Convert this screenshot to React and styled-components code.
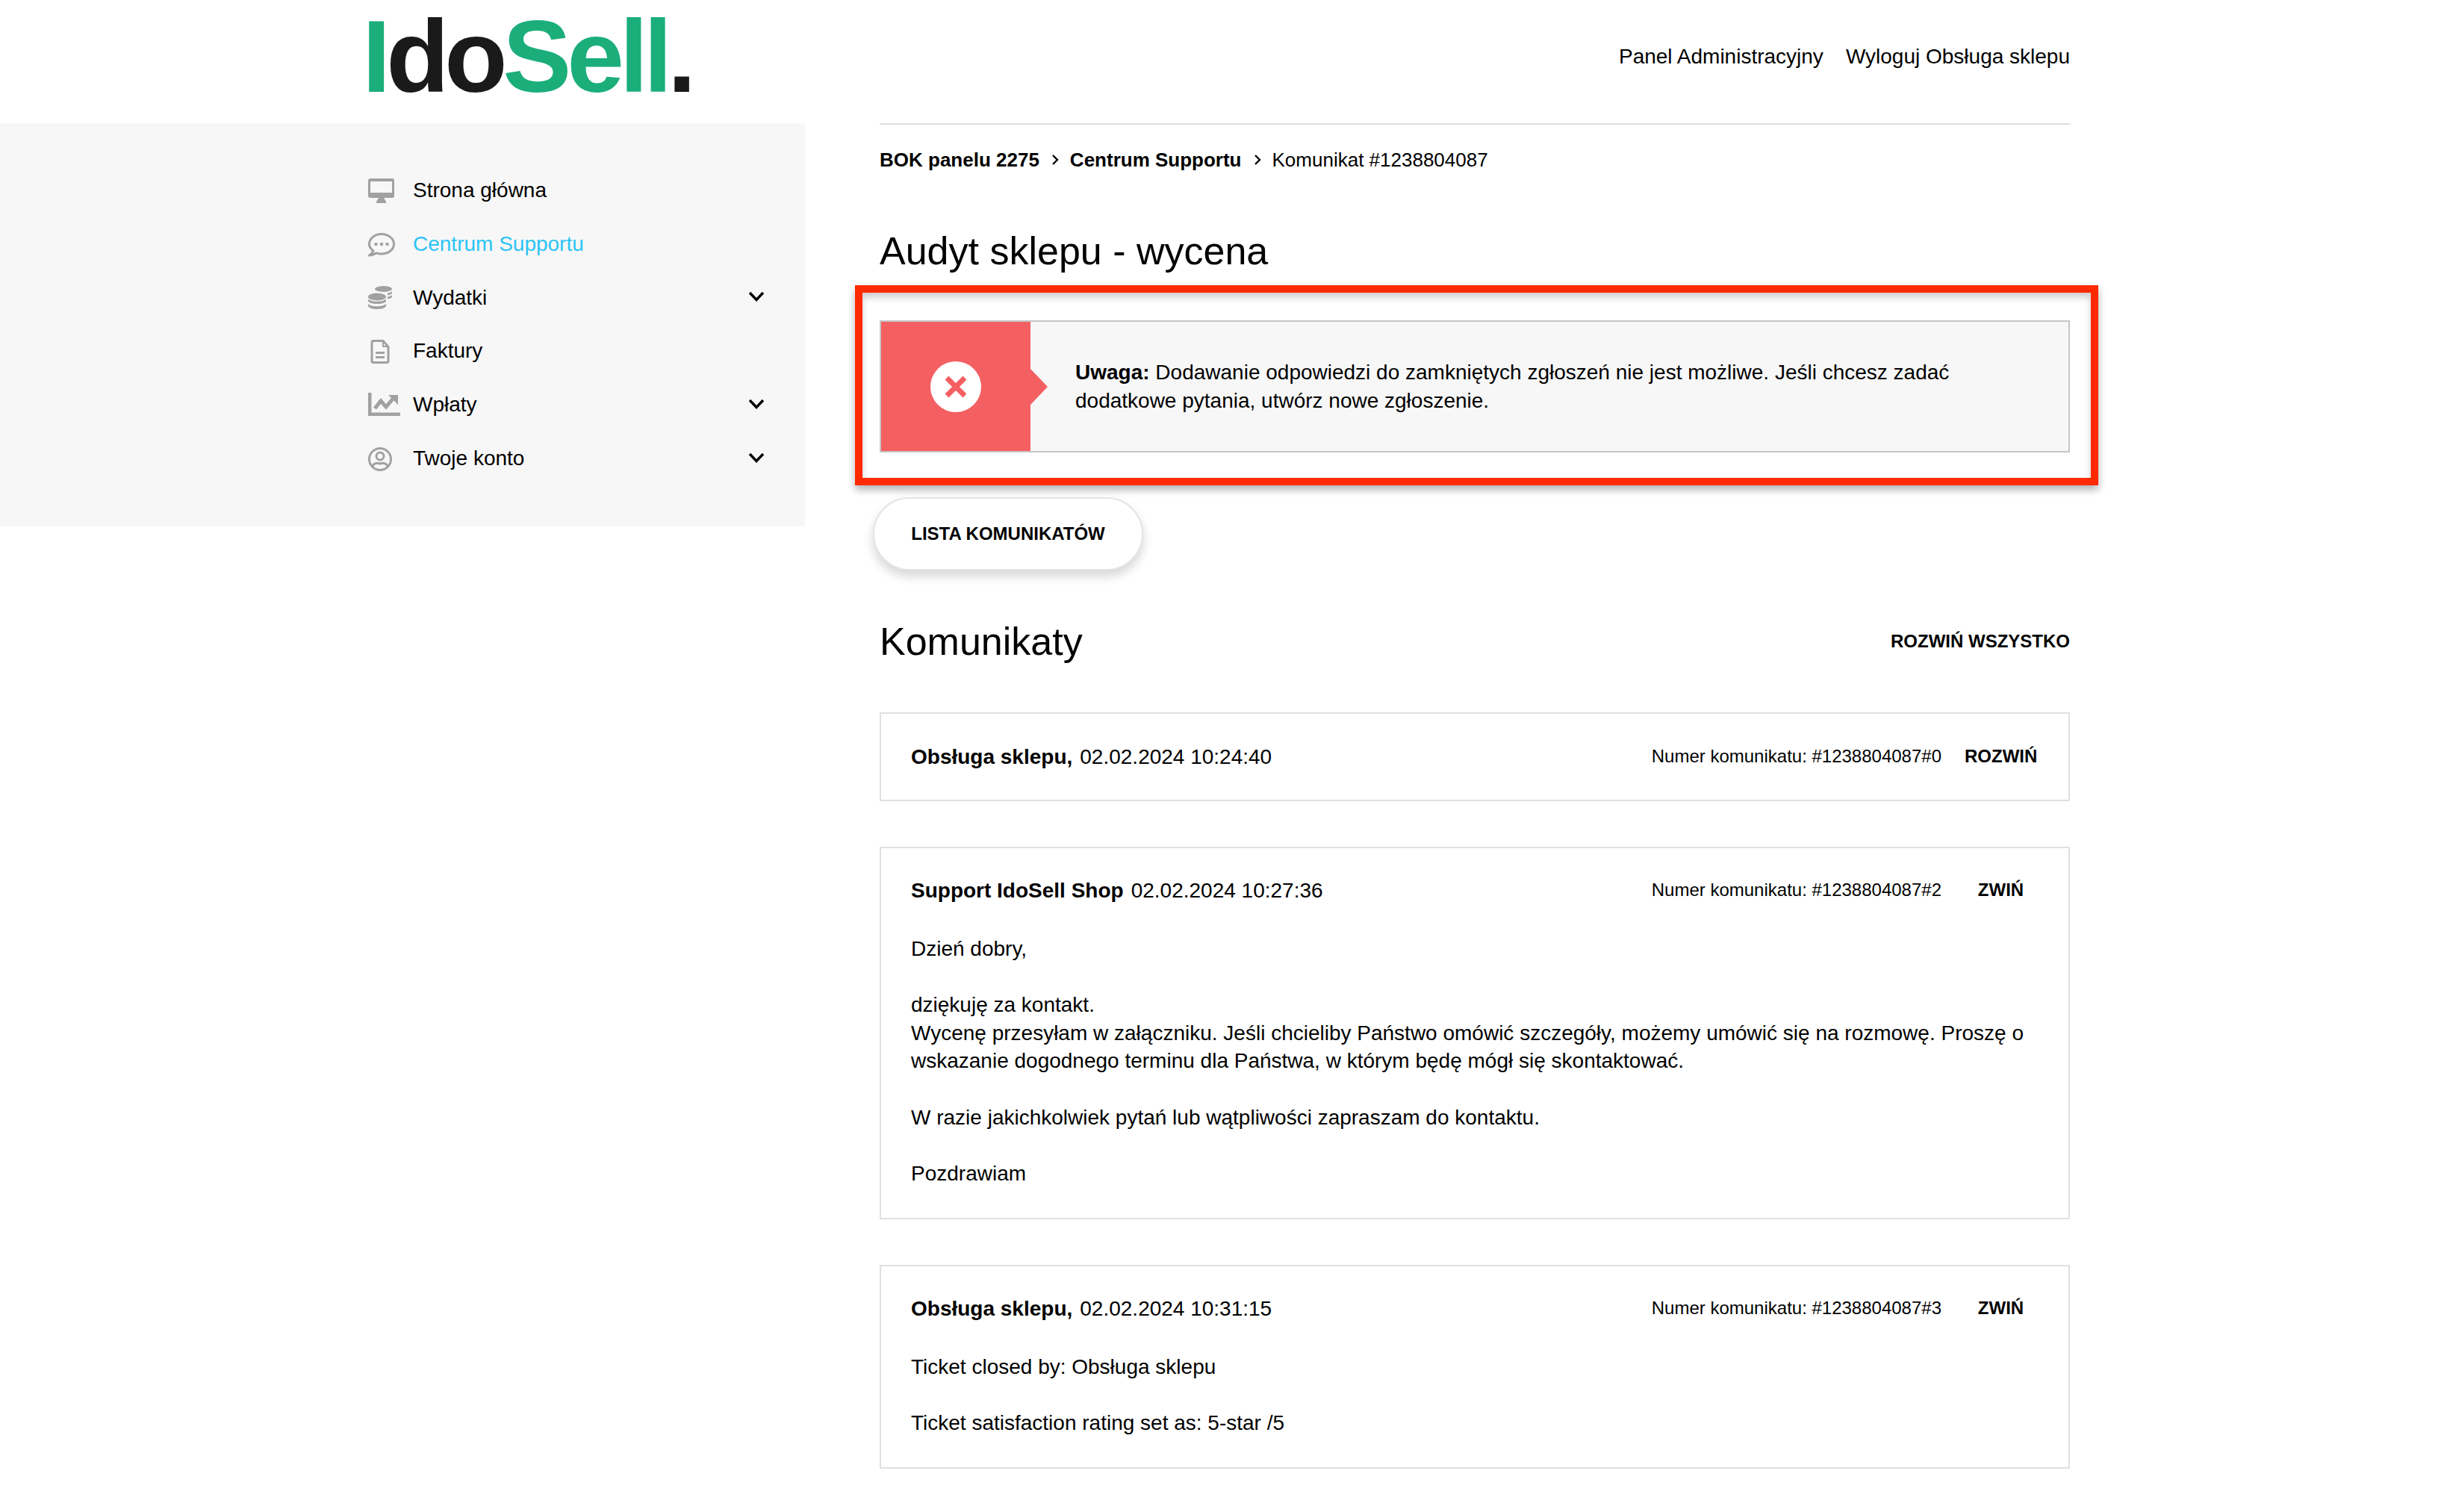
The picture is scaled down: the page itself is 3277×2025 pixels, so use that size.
import React from 'react';
import styled, { createGlobalStyle } from 'styled-components';

const GlobalStyle = createGlobalStyle`
  html, body {
    margin: 0;
    padding: 0;
    background: #fff;
    color: #000;
    font-family: "Liberation Sans", Arial, sans-serif;
    font-size: 28px;
    line-height: 37.6px;
  }
  * { box-sizing: border-box; }
`;

const Header = styled.header`
  height: 165px;
  padding: 0 505px 0 491px;
  display: flex;
  align-items: center;
  justify-content: space-between;
`;

const Logo = styled.div`
  font-size: 138px;
  line-height: 150px;
  font-weight: 700;
  letter-spacing: -6.2px;
  color: #1a1a1a;
  margin: -15px 0 0 -6px;
`;

const Green = styled.span`
  color: #1bae7b;
`;

const TopLinks = styled.nav`
  display: flex;
  gap: 30px;
  margin-top: -14px;
`;

const Layout = styled.div`
  display: grid;
  grid-template-columns: 1078px 1594px;
  column-gap: 100px;
  align-items: start;
`;

const Sidebar = styled.aside`
  background: #f7f7f7;
  padding: 53px 54px 56px 493px;
`;

const NavRow = styled.div`
  height: 71.8px;
  display: flex;
  align-items: center;
  color: ${(p) => (p.$active ? '#2cc4f5' : '#000')};
`;

const NavIcon = styled.svg`
  width: 44px;
  height: 36px;
  margin-right: 16px;
  flex: none;
  fill: #a1a1a1;
`;

const NavLabel = styled.span`
  flex: 1;
  padding-top: 2px;
`;

const Chevron = styled.svg`
  width: 22px;
  height: 14px;
  fill: none;
  stroke: #000;
  stroke-width: 3.4px;
`;

const Main = styled.main`
  border-top: 2px solid #dedede;
`;

const Breadcrumb = styled.div`
  margin-top: 28px;
  display: flex;
  align-items: center;
  font-size: 26px;
  line-height: 38px;
`;

const Crumb = styled.span`
  font-weight: ${(p) => (p.$current ? 400 : 700)};
`;

const CrumbArrow = styled.svg`
  width: 10px;
  height: 16px;
  margin: 0 15px 0 16px;
  fill: none;
  stroke: #000;
  stroke-width: 2.4px;
`;

const Title = styled.h1`
  margin: 71px 0 0;
  font-size: 52px;
  line-height: 64px;
  font-weight: 400;
`;

const Highlight = styled.div`
  margin: 14px -38px 0 -33px;
  padding: 37px 28px 34px 23px;
  border: 10px solid #ff2a00;
  box-shadow: 0 6px 10px rgba(0, 0, 0, 0.3), inset 0 6px 10px rgba(0, 0, 0, 0.2);
`;

const Alert = styled.div`
  height: 177px;
  display: flex;
  align-items: center;
  background: #f7f7f7;
  border: 2px solid #c6c6c6;
`;

const AlertMark = styled.div`
  position: relative;
  width: 200px;
  height: 100%;
  flex: none;
  display: flex;
  align-items: center;
  justify-content: center;
  background: #f45f62;

  &::after {
    content: '';
    position: absolute;
    left: 100%;
    top: 50%;
    margin-top: -24px;
    border-style: solid;
    border-width: 24px 0 24px 23px;
    border-color: transparent transparent transparent #f45f62;
  }
`;

const AlertCircle = styled.div`
  width: 68px;
  height: 68px;
  border-radius: 50%;
  background: #fff;
  display: flex;
  align-items: center;
  justify-content: center;
`;

const AlertCross = styled.svg`
  width: 34px;
  height: 34px;
  stroke: #f45f62;
  stroke-width: 7px;
`;

const AlertText = styled.p`
  margin: 0;
  padding: 0 90px 0 60px;
`;

const ListButton = styled.button`
  display: block;
  margin: 16px 0 0 -9px;
  width: 362px;
  height: 98px;
  background: #fff;
  border: 2px solid #e4e4e4;
  border-radius: 49px;
  box-shadow: 0 8px 14px rgba(0, 0, 0, 0.16);
  font-family: inherit;
  font-size: 24px;
  font-weight: 700;
  color: #000;
  padding: 0;
`;

const SectionHead = styled.div`
  margin-top: 63px;
  display: flex;
  align-items: center;
  justify-content: space-between;
`;

const SectionTitle = styled.h2`
  margin: 0;
  font-size: 52px;
  line-height: 64px;
  font-weight: 400;
`;

const ExpandAll = styled.span`
  font-size: 24px;
  font-weight: 700;
`;

const Messages = styled.div`
  margin-top: 63px;
  display: flex;
  flex-direction: column;
  gap: 60.6px;
`;

const Card = styled.article`
  border: 2px solid #e0e0e0;
  padding: ${(p) => (p.$collapsed ? '39px' : '38.5px')} 42px ${(p) => (p.$collapsed ? '38px' : '40.5px')} 40px;
`;

const CardHead = styled.div`
  display: flex;
  align-items: center;
  height: 38px;
`;

const Author = styled.strong`
  margin-right: 10px;
`;

const CardDate = styled.span`
  flex: 1;
`;

const MessageNo = styled.span`
  font-size: 24px;
  margin-top: -2px;
`;

const Toggle = styled.span`
  width: 97px;
  margin-left: 31px;
  margin-top: -2px;
  text-align: center;
  font-size: 24px;
  font-weight: 700;
`;

const CardBody = styled.div`
  margin-top: 40px;
`;

const MonitorIcon = () => (
  <NavIcon viewBox="0 0 44 36">
    <path fillRule="evenodd" d="M3 3h29a3 3 0 0 1 3 3v20a3 3 0 0 1-3 3H3a3 3 0 0 1-3-3V6a3 3 0 0 1 3-3zm0 4v15h29V7z" />
    <path d="M14 29h7l3 5v2H11v-2z" />
  </NavIcon>
);

const ChatIcon = () => (
  <NavIcon viewBox="0 0 44 36">
    <path
      d="M7 28C3.500 25.500 1.500 22.500 1.500 19 1.500 11.500 9 5.500 18 5.500S34.500 11.500 34.500 19 27 32 18 32c-2.500 0-5-.4-7-1.200C8 33 5 34 1.500 34 4 32.500 6 30.500 7 28z"
      fill="none"
      stroke="#a1a1a1"
      strokeWidth="3"
      strokeLinejoin="round"
    />
    <circle cx="10.500" cy="19" r="2.200" />
    <circle cx="18" cy="19" r="2.200" />
    <circle cx="25.500" cy="19" r="2.200" />
  </NavIcon>
);

const CoinsIcon = () => (
  <NavIcon viewBox="0 0 44 36">
    <ellipse cx="20.500" cy="8" rx="11.500" ry="4" />
    <path d="M26 13.500c2.500-.4 4.800-1.200 6-2.300V14c-1 1.200-3.200 2-6 2.400zM26 18.500c2.500-.4 4.800-1.200 6-2.300v2.800c-1 1.200-3.200 2-6 2.400z" />
    <ellipse cx="12" cy="18.500" rx="12" ry="5" />
    <path d="M0 21.500c2 2 6.500 3.200 12 3.200s10-1.200 12-3.200v3c-1.500 2.200-6.500 3.600-12 3.600S1.500 26.700 0 24.500zM0 28c2 2 6.500 3.200 12 3.200S22 30 24 28v3c-1.500 2.800-6.500 4-12 4S1.500 33.800 0 31z" />
  </NavIcon>
);

const DocIcon = () => (
  <NavIcon viewBox="0 0 44 36">
    <path
      d="M7 5.500h13l7 8v19a2 2 0 0 1-2 2H7a2 2 0 0 1-2-2v-25a2 2 0 0 1 2-2z"
      fill="none"
      stroke="#a1a1a1"
      strokeWidth="3"
      strokeLinejoin="round"
    />
    <path d="M19 5h2v7h7v2h-9zM10 20h12v3H10zM10 26h12v3H10z" />
  </NavIcon>
);

const ChartIcon = () => (
  <NavIcon viewBox="0 0 44 36">
    <path d="M0 3h4.500v26.500H43V34H0z" />
    <path d="M9 24l8-10 7 8 10-12" fill="none" stroke="#a1a1a1" strokeWidth="5" />
    <path d="M27 6h13v13z" />
  </NavIcon>
);

const UserIcon = () => (
  <NavIcon viewBox="0 0 44 36">
    <circle cx="16" cy="20" r="14.500" fill="none" stroke="#a1a1a1" strokeWidth="3" />
    <circle cx="16" cy="16" r="5" fill="none" stroke="#a1a1a1" strokeWidth="3" />
    <path d="M6 30c1-5 6-5.500 10-4 4-1.500 9-1 10 4" fill="none" stroke="#a1a1a1" strokeWidth="3" />
  </NavIcon>
);

const ChevronDown = () => (
  <Chevron viewBox="0 0 22 14">
    <path d="M2 2l9 9.500L20 2" />
  </Chevron>
);

const Arrow = () => (
  <CrumbArrow viewBox="0 0 10 16">
    <path d="M2 2l6 6-6 6" />
  </CrumbArrow>
);

const navItems = [
  { label: 'Strona główna', icon: <MonitorIcon /> },
  { label: 'Centrum Supportu', icon: <ChatIcon />, active: true },
  { label: 'Wydatki', icon: <CoinsIcon />, more: true },
  { label: 'Faktury', icon: <DocIcon /> },
  { label: 'Wpłaty', icon: <ChartIcon />, more: true },
  { label: 'Twoje konto', icon: <UserIcon />, more: true },
];

function App() {
  return (
    <>
      <GlobalStyle />
      <Header>
        <Logo>
          <Green>I</Green>do<Green>Sell</Green>.
        </Logo>
        <TopLinks>
          <span>Panel Administracyjny</span>
          <span>Wyloguj Obsługa sklepu</span>
        </TopLinks>
      </Header>
      <Layout>
        <Sidebar>
          {navItems.map((item) => (
            <NavRow key={item.label} $active={item.active}>
              {item.icon}
              <NavLabel>{item.label}</NavLabel>
              {item.more && <ChevronDown />}
            </NavRow>
          ))}
        </Sidebar>
        <Main>
          <Breadcrumb>
            <Crumb>BOK panelu 2275</Crumb>
            <Arrow />
            <Crumb>Centrum Supportu</Crumb>
            <Arrow />
            <Crumb $current>Komunikat #1238804087</Crumb>
          </Breadcrumb>
          <Title>Audyt sklepu - wycena</Title>
          <Highlight>
            <Alert>
              <AlertMark>
                <AlertCircle>
                  <AlertCross viewBox="0 0 34 34">
                    <path d="M5 5l24 24M29 5L5 29" />
                  </AlertCross>
                </AlertCircle>
              </AlertMark>
              <AlertText>
                <strong>Uwaga:</strong> Dodawanie odpowiedzi do zamkniętych zgłoszeń nie jest możliwe. Jeśli chcesz
                zadać dodatkowe pytania, utwórz nowe zgłoszenie.
              </AlertText>
            </Alert>
          </Highlight>
          <ListButton>LISTA KOMUNIKATÓW</ListButton>
          <SectionHead>
            <SectionTitle>Komunikaty</SectionTitle>
            <ExpandAll>ROZWIŃ WSZYSTKO</ExpandAll>
          </SectionHead>
          <Messages>
            <Card $collapsed>
              <CardHead>
                <Author>Obsługa sklepu,</Author>
                <CardDate>02.02.2024 10:24:40</CardDate>
                <MessageNo>Numer komunikatu: #1238804087#0</MessageNo>
                <Toggle>ROZWIŃ</Toggle>
              </CardHead>
            </Card>
            <Card>
              <CardHead>
                <Author>Support IdoSell Shop</Author>
                <CardDate>02.02.2024 10:27:36</CardDate>
                <MessageNo>Numer komunikatu: #1238804087#2</MessageNo>
                <Toggle>ZWIŃ</Toggle>
              </CardHead>
              <CardBody>
                Dzień dobry,
                <br />
                <br />
                dziękuję za kontakt.
                <br />
                Wycenę przesyłam w załączniku. Jeśli chcieliby Państwo omówić szczegóły, możemy umówić się na rozmowę.
                Proszę o wskazanie dogodnego terminu dla Państwa, w którym będę mógł się skontaktować.
                <br />
                <br />
                W razie jakichkolwiek pytań lub wątpliwości zapraszam do kontaktu.
                <br />
                <br />
                Pozdrawiam
              </CardBody>
            </Card>
            <Card>
              <CardHead>
                <Author>Obsługa sklepu,</Author>
                <CardDate>02.02.2024 10:31:15</CardDate>
                <MessageNo>Numer komunikatu: #1238804087#3</MessageNo>
                <Toggle>ZWIŃ</Toggle>
              </CardHead>
              <CardBody>
                Ticket closed by: Obsługa sklepu
                <br />
                <br />
                Ticket satisfaction rating set as: 5-star /5
              </CardBody>
            </Card>
          </Messages>
        </Main>
      </Layout>
    </>
  );
}

export default App;
